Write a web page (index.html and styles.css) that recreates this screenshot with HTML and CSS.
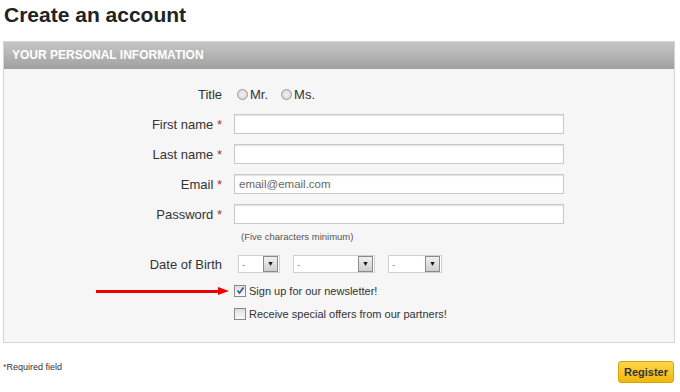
FILE: index.html
```html
<!DOCTYPE html>
<html lang="en">
<head>
    <meta charset="UTF-8">
    <title>Create an account</title>
    <link rel="stylesheet" href="styles.css">
</head>
<body>
    <h1>Create an account</h1>

    <div class="panel">
        <div class="panel-head">Your personal information</div>
        <div class="panel-body">
            <div class="row">
                <label class="label">Title</label>
                <div class="field radios">
                    <span class="radio"></span><span class="radio-text">Mr.</span>
                    <span class="radio"></span><span class="radio-text">Ms.</span>
                </div>
            </div>
            <div class="row">
                <label class="label">First name <span class="req">*</span></label>
                <div class="field"><div class="input"></div></div>
            </div>
            <div class="row">
                <label class="label">Last name <span class="req">*</span></label>
                <div class="field"><div class="input"></div></div>
            </div>
            <div class="row">
                <label class="label">Email <span class="req">*</span></label>
                <div class="field"><div class="input placeholder">email@email.com</div></div>
            </div>
            <div class="row">
                <label class="label">Password <span class="req">*</span></label>
                <div class="field"><div class="input"></div></div>
            </div>
            <div class="hint-row">(Five characters minimum)</div>
            <div class="row dob-row">
                <label class="label">Date of Birth</label>
                <div class="field selects">
                    <div class="select sel-day"><span>-</span><span class="sel-btn">&#9660;</span></div>
                    <div class="select sel-month"><span>-</span><span class="sel-btn">&#9660;</span></div>
                    <div class="select sel-year"><span>-</span><span class="sel-btn">&#9660;</span></div>
                </div>
            </div>
            <div class="check-row newsletter">
                <div class="arrow"><span class="arrow-line"></span><span class="arrow-head"></span></div>
                <span class="checkbox checked">
                    <svg width="9" height="9" viewBox="0 0 9 9"><path d="M1.5 4.5 L3.5 7 L7.5 1.5" fill="none" stroke="#3d4f8f" stroke-width="1.6"/></svg>
                </span>
                <span class="check-text">Sign up for our newsletter!</span>
            </div>
            <div class="check-row">
                <span class="checkbox"></span>
                <span class="check-text">Receive special offers from our partners!</span>
            </div>
        </div>
    </div>

    <div class="footer">
        <span class="required"><span class="req">*</span>Required field</span>
        <button class="register">Register</button>
    </div>
</body>
</html>
```

FILE: styles.css
```css
body {
    margin: 0;
    font-family: "Liberation Sans", Arial, sans-serif;
    color: #333;
    background-color: #fff;
}
h1 {
    margin: 0;
    padding: 3px 0 0 4px;
    font-size: 21px;
    font-weight: bold;
    color: #222;
    line-height: 24px;
}
.panel {
    margin: 14px 5px 0 3px;
    border: 1px solid #d4d4d4;
    background-color: #f6f6f6;
}
.panel-head {
    height: 27px;
    line-height: 27px;
    padding-left: 8px;
    background: linear-gradient(#c6c6c6, #a0a0a0);
    color: #fff;
    font-size: 12px;
    font-weight: bold;
    text-transform: uppercase;
}
.panel-body {
    padding: 10px 0 17px 0;
}
.row {
    display: flex;
    align-items: center;
    height: 30px;
}
.label {
    width: 218px;
    text-align: right;
    font-size: 13px;
    color: #333;
}
.req {
    color: #b03030;
}
.field {
    margin-left: 12px;
    display: flex;
    align-items: center;
}
.radios {
    margin-left: 15px;
    font-size: 13px;
}
.radio {
    width: 9px;
    height: 9px;
    border: 1px solid #999;
    border-radius: 50%;
    background: radial-gradient(#f2f2f2, #cfcfcf);
}
.radio-text {
    margin: 0 13px 0 2px;
}
.input {
    width: 324px;
    height: 18px;
    border: 1px solid #c9c9c9;
    box-shadow: inset 0 1px 1px #e2e2e2;
    background-color: #fff;
    font-size: 11.5px;
    line-height: 18px;
    padding-left: 4px;
}
.placeholder {
    color: #666;
}
.hint-row {
    height: 16px;
    line-height: 16px;
    padding-left: 237px;
    font-size: 9.5px;
    color: #555;
}
.dob-row {
    margin-top: 4px;
}
.selects {
    margin-left: 16px;
}
.select {
    display: flex;
    justify-content: space-between;
    align-items: center;
    height: 16px;
    border: 1px solid #d0d0d0;
    background-color: #fff;
    font-size: 10px;
    color: #999;
    padding-left: 3px;
    margin-right: 13px;
}
.sel-day {
    width: 37px;
}
.sel-month {
    width: 77px;
}
.sel-year {
    width: 49px;
}
.sel-btn {
    width: 13px;
    height: 14px;
    margin-right: 1px;
    border: 1px solid #8a8a8a;
    background: linear-gradient(#f0f0f0, #cfcfcf);
    color: #111;
    font-size: 7px;
    line-height: 14px;
    text-align: center;
}
.check-row {
    position: relative;
    display: flex;
    align-items: center;
    height: 23px;
    padding-left: 230px;
    font-size: 11px;
}
.checkbox {
    display: flex;
    align-items: center;
    justify-content: center;
    width: 10px;
    height: 10px;
    border: 1px solid #8a8a8a;
    background: linear-gradient(#dedede, #fafafa);
}
.check-text {
    margin-left: 3px;
}
.arrow {
    position: absolute;
    left: 92px;
    top: 8px;
    display: flex;
    align-items: center;
}
.arrow-line {
    width: 122px;
    height: 3px;
    background-color: #e00;
}
.arrow-head {
    width: 0;
    height: 0;
    border-top: 4px solid transparent;
    border-bottom: 4px solid transparent;
    border-left: 11px solid #e00;
}
.footer {
    display: flex;
    justify-content: space-between;
    align-items: flex-start;
    margin: 18px 6px 0 3px;
}
.required {
    font-size: 9px;
    line-height: 12px;
    color: #333;
}
.register {
    width: 56px;
    height: 22px;
    padding: 0;
    border: 1px solid #d9a400;
    border-radius: 3px;
    background: linear-gradient(#fdd84c, #f1b60c);
    font-family: "Liberation Sans", Arial, sans-serif;
    font-size: 11px;
    font-weight: bold;
    color: #333;
}
```
